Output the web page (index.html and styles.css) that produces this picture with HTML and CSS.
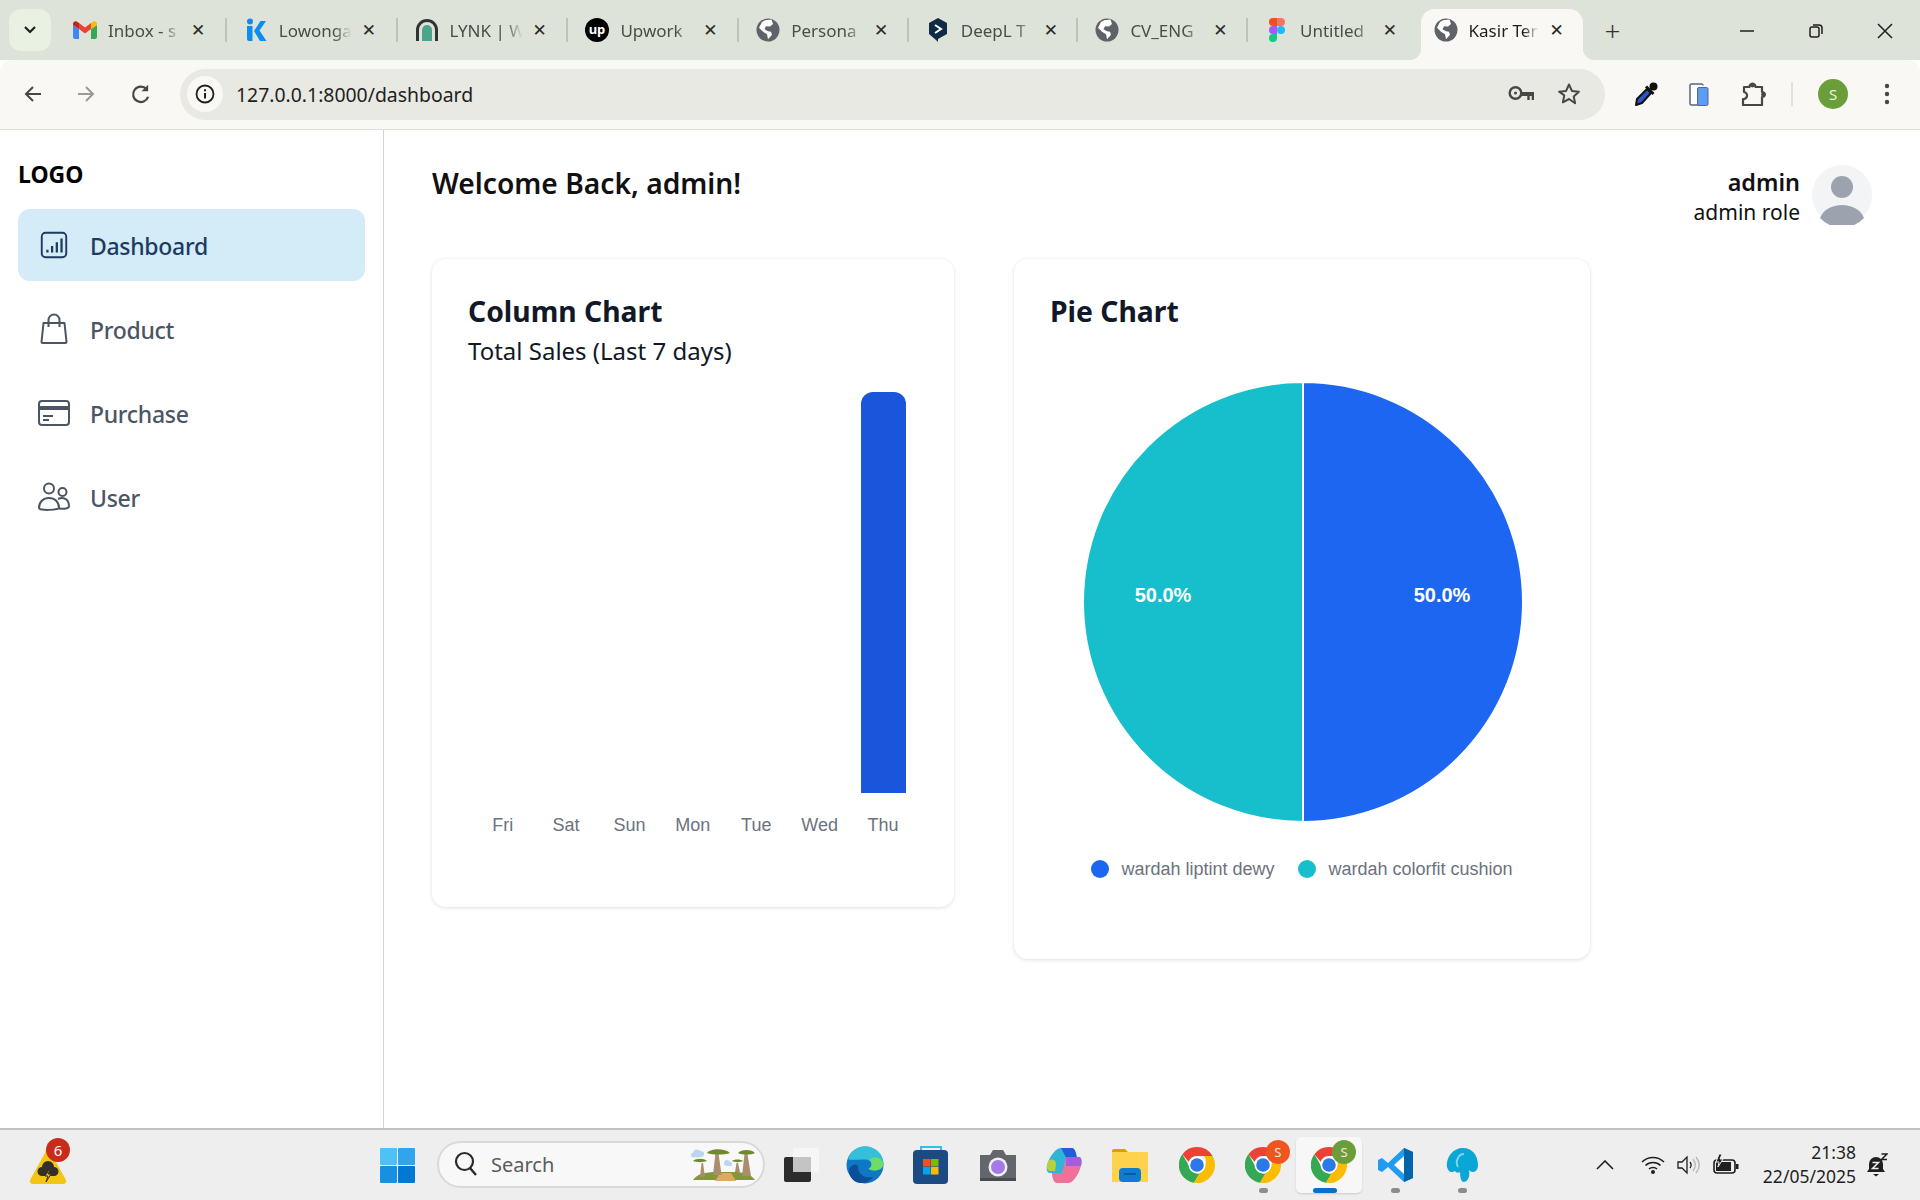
FILE: index.html
```html
<!DOCTYPE html>
<html lang="en">
<head>
    <meta charset="UTF-8">
    <meta name="viewport" content="width=device-width, initial-scale=1.0">
    <title>Kasir Terpadu</title>
    <link rel="stylesheet" href="styles.css">
</head>
<body>
    <svg class="defs" width="0" height="0">
        <symbol id="globe" viewBox="0 0 24 24">
            <circle cx="12" cy="12" r="11.5" fill="#5f6368"/>
            <path fill="#fff" d="M9 2.2 15.5 1.6 17 6l-3 2.5-4-.2-1.5 3 3.5 2 3 .5 1 3-4 4.5-1-5-4-2.5-4-4L6 4z"/>
        </symbol>
        <symbol id="chrome" viewBox="0 0 36 36">
            <path fill="#ea4335" d="M18 0a18 18 0 0 1 15.6 9H18a9 9 0 0 0-8.4 5.7L3.4 7.2A18 18 0 0 1 18 0z"/>
            <path fill="#34a853" d="M3.4 7.2 10.700 20a9 9 0 0 0 10 6.600L15 35.800A18 18 0 0 1 3.400 7.200z"/>
            <path fill="#fbbc04" d="M33.600 9A18 18 0 0 1 15 35.800L23 22a9 9 0 0 0 2-13z"/>
            <circle cx="18" cy="18" r="8.500" fill="#fff"/>
            <circle cx="18" cy="18" r="6.800" fill="#2b78e8"/>
        </symbol>
    </svg>

    <div class="tabstrip">
        <div class="tab-search"><svg width="14" height="10" viewBox="0 0 14 10"><path d="M2 2l5 5 5-5" fill="none" stroke="#1f1f1f" stroke-width="2.200"/></svg></div>
        <div class="tab sep">
            <svg class="favicon" viewBox="0 0 24 18"><path fill="#4285f4" d="M0 4v12a2 2 0 0 0 2 2h4V8z"/><path fill="#34a853" d="M18 18h4a2 2 0 0 0 2-2V4l-6 4z"/><path fill="#ea4335" d="M6 8V2l6 4.500L18 2v6l-6 4.500z"/><path fill="#fbbc04" d="M18 2v6l6-4V3c0-2.500-2.800-3.600-4.500-2z"/><path fill="#c5221f" d="M0 3v1l6 4V2L4.500 1C2.800-.6 0 .5 0 3z"/></svg>
            <span class="tab-title">Inbox - s</span><span class="tab-close">✕</span>
        </div>
        <div class="tab sep">
            <svg class="favicon" viewBox="0 0 24 24"><circle cx="6" cy="3.500" r="3" fill="#0a8cf0"/><path fill="#0a8cf0" d="M3 8h5.500v15H5a2 2 0 0 1-2-2zM10 13l6.500-10H22l-6.500 9.500L22.500 23H16z"/></svg>
            <span class="tab-title">Lowonga</span><span class="tab-close">✕</span>
        </div>
        <div class="tab sep">
            <svg class="favicon" viewBox="0 0 24 24"><path fill="none" stroke="#2f3336" stroke-width="3" d="M2.500 23V12a9.500 9.500 0 0 1 19 0v11"/><path fill="#4aa58a" d="M7 23V12a5 5 0 0 1 10 0v11z"/></svg>
            <span class="tab-title">LYNK | W</span><span class="tab-close">✕</span>
        </div>
        <div class="tab sep">
            <svg class="favicon" viewBox="0 0 24 24"><circle cx="12" cy="12" r="12" fill="#000"/><text x="12" y="15.500" class="up-mark">up</text></svg>
            <span class="tab-title">Upwork</span><span class="tab-close">✕</span>
        </div>
        <div class="tab sep">
            <svg class="favicon"><use href="#globe"/></svg>
            <span class="tab-title">Persona</span><span class="tab-close">✕</span>
        </div>
        <div class="tab sep">
            <svg class="favicon" viewBox="0 0 24 24"><path fill="#0f2b46" d="M12 0l9 5v11l-9 5v3l-2-2-7-6V5z"/><path fill="none" stroke="#fff" stroke-width="2" d="M9 7l6 4-6 4"/></svg>
            <span class="tab-title">DeepL T</span><span class="tab-close">✕</span>
        </div>
        <div class="tab sep">
            <svg class="favicon"><use href="#globe"/></svg>
            <span class="tab-title">CV_ENG</span><span class="tab-close">✕</span>
        </div>
        <div class="tab">
            <svg class="favicon" viewBox="0 0 16 24"><path fill="#f24e1e" d="M4 0h4v8H4a4 4 0 0 1 0-8z"/><path fill="#ff7262" d="M8 0h4a4 4 0 0 1 0 8H8z"/><path fill="#a259ff" d="M4 8h4v8H4a4 4 0 0 1 0-8z"/><circle cx="12" cy="12" r="4" fill="#1abcfe"/><path fill="#0acf83" d="M4 16h4v4a4 4 0 1 1-4-4z"/></svg>
            <span class="tab-title">Untitled</span><span class="tab-close">✕</span>
        </div>
        <div class="tab active">
            <svg class="favicon"><use href="#globe"/></svg>
            <span class="tab-title">Kasir Ter</span><span class="tab-close">✕</span>
        </div>
        <div class="new-tab">+</div>
        <div class="window-btns">
            <svg width="16" height="16" viewBox="0 0 16 16"><path d="M1 8h14" stroke="#1f1f1f" stroke-width="1.500"/></svg>
            <svg width="16" height="16" viewBox="0 0 16 16"><rect x="2" y="4" width="9" height="10" rx="2" fill="none" stroke="#1f1f1f" stroke-width="1.500"/><path d="M5 2h6a3 3 0 0 1 3 3v6" fill="none" stroke="#1f1f1f" stroke-width="1.500"/></svg>
            <svg width="16" height="16" viewBox="0 0 16 16"><path d="M1 1l14 14M15 1 1 15" stroke="#1f1f1f" stroke-width="1.500"/></svg>
        </div>
    </div>

    <div class="toolbar">
        <div class="nav-btns">
            <svg width="20" height="20" viewBox="0 0 20 20"><path d="M18 10H3M10 3l-7 7 7 7" fill="none" stroke="#474747" stroke-width="2"/></svg>
            <svg width="20" height="20" viewBox="0 0 20 20"><path d="M2 10h15M10 3l7 7-7 7" fill="none" stroke="#9a9a98" stroke-width="2"/></svg>
            <svg width="22" height="22" viewBox="0 0 20 20"><path d="M16.500 12.500A7 7 0 1 1 15 5.500" fill="none" stroke="#474747" stroke-width="2"/><path d="M16.500 1.500v6h-6z" fill="#474747"/></svg>
        </div>
        <div class="address-bar">
            <div class="site-info"><svg width="20" height="20" viewBox="0 0 20 20"><circle cx="10" cy="10" r="8.500" fill="none" stroke="#1f1f1f" stroke-width="1.800"/><path d="M10 9v5.500M10 5.200v2" stroke="#1f1f1f" stroke-width="2"/></svg></div>
            <span class="url">127.0.0.1:8000/dashboard</span>
            <div class="address-icons">
                <svg width="27" height="16" viewBox="0 0 27 16"><circle cx="7.500" cy="7" r="5.800" fill="none" stroke="#474747" stroke-width="2.400"/><circle cx="7.500" cy="7" r="1.500" fill="#474747"/><path d="M13 5.900h13v8h-2.300v-4h-2v4h-2.400v-4H13z" fill="#474747"/></svg>
                <svg width="24" height="24" viewBox="0 0 24 24"><path d="M12 2.500l2.900 6.400 7 .8-5.200 4.700 1.400 6.900L12 17l-6.100 3.300 1.400-6.900L2.100 9.700l7-.8z" fill="none" stroke="#474747" stroke-width="2" stroke-linejoin="round"/></svg>
            </div>
        </div>
        <div class="toolbar-ext">
            <svg class="ext-drop" width="24" height="24" viewBox="0 0 24 24"><circle cx="19.500" cy="4.500" r="4" fill="#111"/><path d="M13 3.500l7.500 7.500-2 2L11 5.500z" fill="#111"/><path d="M13 7l4 4-9 10-6 2 1-6z" fill="#2f54c8" stroke="#111" stroke-width="2" stroke-linejoin="round"/></svg>
            <svg class="ext-phone" width="20" height="23" viewBox="0 0 20 23"><path d="M14 2.500A1.500 1.500 0 0 0 12.500 1h-10A1.500 1.500 0 0 0 1 2.500v18A1.500 1.500 0 0 0 2.500 22H9" fill="#fff" stroke="#5a6578" stroke-width="1.500"/><rect x="8.500" y="4.500" width="10.500" height="18" rx="1.500" fill="#5b9cf5" stroke="#5a6578"/></svg>
            <svg class="ext-puzzle" width="26" height="24" viewBox="0 0 26 24"><path d="M3 5h5.500a3 3 0 0 1 6 0H21v5a2.500 2.500 0 0 1 0 5v8H2v-6a3.500 3.500 0 0 0 1-7z" fill="none" stroke="#474747" stroke-width="2.200" stroke-linejoin="round"/><circle cx="11.500" cy="3" r="2.400" fill="#474747"/><circle cx="22.500" cy="12.500" r="2.400" fill="#474747"/></svg>
            <span class="ext-divider"></span>
            <span class="profile-dot">S</span>
            <svg class="ext-menu" width="6" height="22" viewBox="0 0 6 22"><circle cx="3" cy="3" r="2.200" fill="#474747"/><circle cx="3" cy="11" r="2.200" fill="#474747"/><circle cx="3" cy="19" r="2.200" fill="#474747"/></svg>
        </div>
    </div>

    <div class="app">
        <aside class="sidebar">
            <div class="logo">LOGO</div>
            <nav class="side-nav">
                <a class="nav-item current">
                    <svg class="nav-icon" viewBox="-2 -2 34 34"><rect x="2" y="2" width="26" height="26" rx="4" fill="none" stroke="currentColor" stroke-width="2"/><path d="M8 23v-3M13 23v-7M18 23V12M23 23V8" stroke="currentColor" stroke-width="2.400"/></svg>
                    <span>Dashboard</span>
                </a>
                <a class="nav-item">
                    <svg class="nav-icon" viewBox="0 0 30 32"><path d="M4.500 10h21l2 19a1 1 0 0 1-1 1h-23a1 1 0 0 1-1-1z" fill="none" stroke="currentColor" stroke-width="2" stroke-linejoin="round"/><path d="M9.500 14V7a5.500 5.500 0 0 1 11 0v7" fill="none" stroke="currentColor" stroke-width="2"/></svg>
                    <span>Product</span>
                </a>
                <a class="nav-item">
                    <svg class="nav-icon" viewBox="0 0 32 26"><rect x="1" y="1" width="30" height="24" rx="3" fill="none" stroke="currentColor" stroke-width="2"/><path d="M1 8h30" stroke="currentColor" stroke-width="4"/><path d="M5 16h10M5 20h6" stroke="currentColor" stroke-width="2"/></svg>
                    <span>Purchase</span>
                </a>
                <a class="nav-item">
                    <svg class="nav-icon" viewBox="0 0 32 30"><circle cx="11" cy="6.500" r="5" fill="none" stroke="currentColor" stroke-width="2"/><circle cx="24.500" cy="10" r="4" fill="none" stroke="currentColor" stroke-width="2"/><path d="M1 26c0-6 4-10 10-10s10 4 10 10c0 2-20 3-20 0z" fill="none" stroke="currentColor" stroke-width="2"/><path d="M20 17c5-2.500 11 0 11 7 0 3-5 3-10 2.500" fill="none" stroke="currentColor" stroke-width="2"/></svg>
                    <span>User</span>
                </a>
            </nav>
        </aside>

        <main class="content">
            <header class="page-head">
                <h1>Welcome Back, admin!</h1>
                <div class="user-box">
                    <div class="user-text">
                        <div class="user-name">admin</div>
                        <div class="user-role">admin role</div>
                    </div>
                    <svg class="avatar" viewBox="0 0 60 60"><circle cx="30" cy="30" r="30" fill="#f3f4f6"/><circle cx="30" cy="22" r="11" fill="#9ca3af"/><path d="M8 53c3-8 12-13 22-13s19 5 22 13a30 30 0 0 1-44 0z" fill="#9ca3af"/></svg>
                </div>
            </header>

            <section class="cards">
                <div class="card card-column">
                    <h2>Column Chart</h2>
                    <p class="card-sub">Total Sales (Last 7 days)</p>
                    <div class="bars">
                        <div class="bar-col"><div class="bar-track"></div><span>Fri</span></div>
                        <div class="bar-col"><div class="bar-track"></div><span>Sat</span></div>
                        <div class="bar-col"><div class="bar-track"></div><span>Sun</span></div>
                        <div class="bar-col"><div class="bar-track"></div><span>Mon</span></div>
                        <div class="bar-col"><div class="bar-track"></div><span>Tue</span></div>
                        <div class="bar-col"><div class="bar-track"></div><span>Wed</span></div>
                        <div class="bar-col"><div class="bar-track"><div class="bar" style="height: 100%"></div></div><span>Thu</span></div>
                    </div>
                </div>

                <div class="card card-pie">
                    <h2>Pie Chart</h2>
                    <svg class="pie" viewBox="-1 0 442 442">
                        <path d="M221 1A220 220 0 0 0 221 441Z" fill="#17bfcc" stroke="#fff" stroke-width="2"/>
                        <path d="M221 1A220 220 0 0 1 221 441Z" fill="#1d66f2" stroke="#fff" stroke-width="2"/>
                        <text x="81" y="221">50.0%</text>
                        <text x="360" y="221">50.0%</text>
                    </svg>
                    <div class="legend">
                        <span class="legend-item"><i class="dot dot-blue"></i>wardah liptint dewy</span>
                        <span class="legend-item"><i class="dot dot-teal"></i>wardah colorfit cushion</span>
                    </div>
                </div>
            </section>
        </main>
    </div>

    <footer class="taskbar">
        <div class="weather">
            <svg width="38" height="36" viewBox="0 0 38 36"><path d="M16 4a3 3 0 0 1 6 0l15 27a3 3 0 0 1-3 4H4a3 3 0 0 1-3-4z" fill="#f3c613"/><path d="M13 27a4.500 4.500 0 0 1 0-9 6 6 0 0 1 12 0 4.500 4.500 0 0 1 0 9z" fill="#33302a"/><path d="M20 21l-4 6h3l-2 6 5-8h-3l2-4z" fill="#f3c613" stroke="#33302a"/></svg>
            <span class="weather-badge">6</span>
        </div>
        <svg class="win-logo" width="35" height="35" viewBox="0 0 35 35"><rect width="17" height="17" rx="1" fill="#4cc2f7"/><rect x="18" width="17" height="17" rx="1" fill="#2ea5ec"/><rect y="18" width="17" height="17" rx="1" fill="#1590e3"/><rect x="18" y="18" width="17" height="17" rx="1" fill="#0078d4"/></svg>
        <div class="task-search">
            <svg width="24" height="26" viewBox="0 0 24 26"><circle cx="10.500" cy="10.500" r="8.500" fill="none" stroke="#2a2a2a" stroke-width="2.200"/><path d="M16 17l6 7" stroke="#2a2a2a" stroke-width="2.400"/></svg>
            <span>Search</span>
            <svg class="search-art" width="66" height="36" viewBox="0 0 66 36">
                <path d="M3 34c4-6 12-8 24-8h18c8 0 16 2 20 8z" fill="#83973a"/>
                <path d="M25 35l5-8h11l5 8z" fill="#dfa768"/>
                <path d="M10 31l1.500-14h1.500l2 14zM23 29l2.500-22h3l3 22zM45 26l1.500-9h1.500l2 9zM52 30l2.500-22h3l3.500 22z" fill="#a98d6c"/>
                <path d="M3 15c3-3 11-3 14 0-4 1.500-10 1.500-14 0zM17 7c4-5 18-5 23 0-6 2-17 2-23 0zM42 15c2-2 9-2 11 0-3 1.500-8 1.500-11 0zM48 7c3-4 14-4 17 0-4 2-13 2-17 0z" fill="#6f8a2c"/>
                <circle cx="7" cy="7.500" r="4" fill="#b9d6ee"/><circle cx="11" cy="8" r="3" fill="#b9d6ee"/><circle cx="3.500" cy="9" r="2.500" fill="#b9d6ee"/>
                <circle cx="37" cy="17" r="3" fill="#b9d6ee"/><circle cx="40" cy="18" r="2.200" fill="#b9d6ee"/>
            </svg>
        </div>
        <svg class="task-view" width="35" height="34" viewBox="0 0 35 34"><rect y="9" width="27" height="25" rx="2" fill="#2c2c2c"/><rect x="9" width="26" height="24" rx="2" fill="#f6f6f6"/><rect x="9" y="9" width="18" height="15" fill="#c4c4c4"/></svg>
        <div class="task-apps">
            <div class="app-btn">
                <svg width="38" height="38" viewBox="0 0 38 38"><circle cx="19" cy="19" r="18.500" fill="#0f78c4"/><path d="M2 13C5 4 12 .5 19 .5c10 0 18.500 7 18.500 17 0 5-5 7-9 7-3 0-5-1-6-2 4-1 5-9-4-9-7 0-14 1-16.500-.5z" fill="#34c0d8"/><path d="M37.500 17.500c0 5-5 7-9 7-3 0-5-1-6-2 4-1 4-6 1-9 5-4 11-3 14 4z" fill="#6fdc6a"/><path d="M12 21c0 7 7 12 15 10-3 5-8 6-12 6C7 37 2 29 3 23c3-5 9-6 9-2z" fill="#0a4f99"/></svg>
            </div>
            <div class="app-btn">
                <svg width="36" height="38" viewBox="0 0 36 38"><path d="M8 6V1h20v5" fill="none" stroke="#35bdf2" stroke-width="2"/><rect y="4" width="35" height="34" rx="4" fill="#1c4a82"/><rect x="10" y="13" width="7.500" height="7.500" fill="#f25022"/><rect x="18" y="13" width="7.500" height="7.500" fill="#7fba00"/><rect x="10" y="21" width="7.500" height="7.500" fill="#00a4ef"/><rect x="18" y="21" width="7.500" height="7.500" fill="#ffb900"/></svg>
            </div>
            <div class="app-btn">
                <svg width="36" height="32" viewBox="0 0 36 32"><path d="M0 6h10l3-5h10l3 5h10v26H0z" fill="#63666c"/><rect y="29" width="36" height="3" fill="#484a4e"/><circle cx="18" cy="18" r="9.500" fill="#f0f0f0"/><circle cx="18" cy="18" r="7" fill="#a47ae8"/></svg>
            </div>
            <div class="app-btn">
                <svg width="36" height="36" viewBox="0 0 36 36"><path d="M15 1h11c3 0 5 10 5 13H21l-5 12H4C0 26 0 20 2 15 5 8 10 1 15 1z" fill="#2fb6d6"/><path d="M2 15c2-4 8-3 8 2l-1 7H4c-3 0-4-5-2-9z" fill="#b6d23a"/><path d="M15 1h11c3 0 5 6 5 13h-9z" fill="#1f5fd8"/><path d="M20 10h13c3 0 3 7 1 12-2 6-7 14-12 14H11c-3 0-5-5-5-10h10z" fill="#f0709a"/><path d="M20 10h13c3 0 3 5 2 9H20z" fill="#a35ee0"/></svg>
            </div>
            <div class="app-btn">
                <svg width="36" height="34" viewBox="0 0 36 34"><path d="M0 3a2 2 0 0 1 2-2h11l3 3h-16z" fill="#d9a000"/><path d="M0 4h36v30H0z" fill="#ffd24d"/><rect x="7" y="20" width="22" height="14" rx="4" fill="#0c7dd0"/><path d="M12 26h12" stroke="#054f8e" stroke-width="1.500"/></svg>
            </div>
            <div class="app-btn"><svg width="36" height="36"><use href="#chrome"/></svg></div>
            <div class="app-btn">
                <svg width="36" height="36"><use href="#chrome"/></svg>
                <span class="app-badge badge-orange">S</span>
                <i class="run-dot"></i>
            </div>
            <div class="app-btn app-open">
                <svg width="36" height="36"><use href="#chrome"/></svg>
                <span class="app-badge badge-green">S</span>
                <i class="run-bar"></i>
            </div>
            <div class="app-btn">
                <svg width="36" height="36" viewBox="0 0 36 36"><path d="M26 1l9 4v26l-9 4L10 20l-6 5-4-2V13l4-2 6 5z" fill="#1f9cf0"/><path d="M26 9l-10 9 10 9z" fill="#fff"/><path d="M26 1l9 4v26l-9 4z" fill="#0065a9"/></svg>
                <i class="run-dot"></i>
            </div>
            <div class="app-btn">
                <svg width="36" height="36" viewBox="0 0 36 36"><path d="M3 20C2 9 10 1 19 1s15 7 15 17c0 4-2 7-5 7-2 0-3-1-4-2 1 5 0 11-5 12-3 0-4-5-4-10-2 1-4 1-5-1-2 1-6 3-8-4z" fill="#0aa6d6"/><path d="M14 20c-3-5 0-13 6-13" fill="none" stroke="#77d8f0" stroke-width="2"/></svg>
                <i class="run-dot"></i>
            </div>
        </div>
        <div class="tray">
            <svg class="tray-up" width="18" height="10" viewBox="0 0 18 10"><path d="M1 9l8-8 8 8" fill="none" stroke="#1f1f1f" stroke-width="1.600"/></svg>
            <svg class="tray-wifi" width="24" height="20" viewBox="0 0 24 20"><path d="M1 7c6-6 16-6 22 0M4.500 10.500c4-4 11-4 15 0M8 14c2-2 6-2 8 0" fill="none" stroke="#1f1f1f" stroke-width="1.500"/><circle cx="12" cy="17" r="2" fill="#1f1f1f"/></svg>
            <svg class="tray-sound" width="24" height="20" viewBox="0 0 24 20"><path d="M1 7v6h4l5 5V2L5 7z" fill="none" stroke="#1f1f1f" stroke-width="1.300"/><path d="M13 7c1.500 2 1.500 4 0 6" fill="none" stroke="#1f1f1f" stroke-width="1.300"/><path d="M16 4c3 4 3 8 0 12M19 2c4 5 4 11 0 16" fill="none" stroke="#b5b5b5" stroke-width="1.300"/></svg>
            <svg class="tray-battery" width="26" height="22" viewBox="0 0 26 22"><rect x="1" y="6" width="21" height="13" rx="3" fill="none" stroke="#1f1f1f" stroke-width="1.600"/><rect x="3" y="8" width="15" height="9" fill="#1f1f1f"/><rect x="23" y="10" width="2.500" height="5" fill="#1f1f1f"/><path d="M6 0L3 8h3l-1 5 5-8H7l2-5z" fill="#1f1f1f" stroke="#eee"/></svg>
            <div class="tray-clock"><span>21:38</span><span>22/05/2025</span></div>
            <svg class="tray-bell" width="22" height="24" viewBox="0 0 22 24"><path d="M10 4a7 7 0 0 0-7 7v5l-2 3h18l-2-3v-5a7 7 0 0 0-7-7z" fill="#1f1f1f"/><path d="M7 21h6l-3 2.500z" fill="#1f1f1f"/><path d="M6.500 9.500h6l-6 6h6" fill="none" stroke="#eee" stroke-width="1.500"/><path d="M15.500 1h5.500l-5.500 5.500h5.500" fill="none" stroke="#1f1f1f" stroke-width="1.500"/></svg>
        </div>
    </footer>
</body>
</html>
```

FILE: styles.css
```css
* {
    box-sizing: border-box;
}

body {
    margin: 0;
    width: 1920px;
    height: 1200px;
    display: flex;
    flex-direction: column;
    overflow: hidden;
    background: #fff;
    color: #111827;
    font-family: 'Noto Sans', 'Open Sans', sans-serif;
}

.defs {
    position: absolute;
}

/* browser tabs */
.tabstrip {
    height: 60px;
    flex: none;
    display: flex;
    align-items: flex-end;
    padding-left: 9px;
    background: #dee3d9;
}

.tab-search {
    width: 42px;
    height: 42px;
    margin: 0 5px 9px 0;
    display: flex;
    align-items: center;
    justify-content: center;
    border-radius: 12px;
    background: #e9f1e2;
}

.tab {
    position: relative;
    width: 169.6px;
    height: 51px;
    flex: none;
    display: flex;
    align-items: center;
    padding: 0 0 9px 17px;
}

.tab:nth-child(-n+5) {
    width: 170.8px;
}

.tab.sep::after {
    content: '';
    position: absolute;
    right: 0;
    top: 9px;
    width: 2px;
    height: 24px;
    background: #bcc5b5;
}

.favicon {
    width: 24px;
    height: 24px;
    flex: none;
}

.tab-title {
    width: 74px;
    margin-left: 11px;
    overflow: hidden;
    white-space: nowrap;
    font-size: 17px;
    color: #4a4d47;
    -webkit-mask-image: linear-gradient(90deg, #000 75%, transparent 98%);
    mask-image: linear-gradient(90deg, #000 75%, transparent 98%);
}

.tab-close {
    width: 16px;
    margin-left: 8px;
    font-size: 17px;
    font-family: 'DejaVu Sans', sans-serif;
    text-align: center;
    color: #2a2c28;
}

.up-mark {
    fill: #fff;
    font: 700 13px 'Noto Sans', sans-serif;
    text-anchor: middle;
}

.tab.active {
    width: 162px;
    margin-left: 3px;
    padding-left: 13px;
    background: #f9f8f4;
    border-radius: 14px 14px 0 0;
}

.tab.active::before,
.tab.active::after {
    content: '';
    position: absolute;
    bottom: 0;
    width: 12px;
    height: 12px;
}

.tab.active::before {
    left: -12px;
    background: radial-gradient(circle at 0 0, transparent 12px, #f9f8f4 12.5px);
}

.tab.active::after {
    right: -12px;
    background: radial-gradient(circle at 100% 0, transparent 12px, #f9f8f4 12.5px);
}

.tab.active .tab-title {
    width: 72px;
    color: #1f1f1f;
}

.new-tab {
    width: 30px;
    margin: 0 0 9px 15px;
    font-size: 28px;
    font-weight: 300;
    line-height: 42px;
    text-align: center;
    color: #333;
}

.window-btns {
    margin: 0 27px 21px auto;
    display: flex;
    gap: 53px;
}

/* address bar row */
.toolbar {
    height: 70px;
    flex: none;
    display: flex;
    align-items: center;
    padding-bottom: 1px;
    border-bottom: 1px solid #e0dfda;
    border-radius: 12px 12px 0 0;
    background: #f9f8f4;
}

.nav-btns {
    width: 180px;
    padding: 0 0 0 23px;
    display: flex;
    align-items: center;
    gap: 33px;
}

.nav-btns svg:last-child {
    margin-left: 1px;
}

.address-bar {
    width: 1425px;
    height: 51px;
    display: flex;
    align-items: center;
    padding-left: 7px;
    border-radius: 26px;
    background: #e8e9e2;
}

.site-info {
    width: 36px;
    height: 36px;
    display: flex;
    align-items: center;
    justify-content: center;
    border-radius: 50%;
    background: #f9f8f4;
}

.url {
    margin-left: 13px;
    font-size: 19.4px;
    color: #1f1f1f;
}

.address-icons {
    margin-left: auto;
    padding-right: 24px;
    display: flex;
    align-items: center;
    gap: 22px;
}

.toolbar-ext {
    flex: 1;
    display: flex;
    align-items: center;
}

.ext-drop {
    margin-left: 29px;
}

.ext-phone {
    margin-left: 31px;
}

.ext-puzzle {
    margin-left: 32px;
}

.ext-divider {
    width: 2px;
    height: 24px;
    margin-left: 24px;
    background: #dde5d6;
}

.profile-dot {
    width: 30px;
    height: 30px;
    margin-left: 25px;
    border-radius: 50%;
    background: #6a9e3a;
    color: #e9f3dd;
    font-size: 15px;
    line-height: 30px;
    text-align: center;
}

.ext-menu {
    margin-left: 36px;
}

/* page */
.app {
    flex: 1;
    display: flex;
    min-height: 0;
}

.sidebar {
    width: 384px;
    flex: none;
    padding: 28px 18px 0;
    border-right: 1px solid #d1d5db;
}

.logo {
    height: 32px;
    margin-bottom: 19px;
    font-size: 23px;
    font-weight: 700;
    line-height: 32px;
    color: #000;
}

.side-nav {
    width: 347px;
    display: flex;
    flex-direction: column;
    gap: 12px;
}

.nav-item {
    height: 72px;
    display: flex;
    align-items: center;
    padding-left: 20px;
    border-radius: 12px;
    font-size: 23px;
    font-weight: 500;
    letter-spacing: -0.3px;
    color: #4b5563;
}

.nav-item span {
    padding-top: 2px;
}

.nav-item.current {
    background: #d4ebf8;
    color: #1e3a5f;
}

.nav-icon {
    width: 32px;
    height: 32px;
    flex: none;
    margin-right: 20px;
}

.content {
    flex: 1;
    padding: 35px 48px 0;
}

.page-head {
    display: flex;
    justify-content: space-between;
    align-items: flex-start;
    height: 60px;
    margin-bottom: 34px;
}

.page-head h1 {
    margin: 0;
    font-size: 28.2px;
    font-weight: 600;
    line-height: 36px;
    color: #111;
}

.user-box {
    display: flex;
    gap: 12px;
}

.user-text {
    padding-top: 2px;
    text-align: right;
    font-size: 23.4px;
    line-height: 30px;
    color: #111;
}

.user-name {
    font-weight: 600;
}

.user-role {
    font-size: 21px;
}

.avatar {
    width: 60px;
    height: 60px;
}

.cards {
    display: flex;
    align-items: flex-start;
    gap: 60px;
}

.card {
    padding: 32px 36px 0;
    border-radius: 14px;
    background: #fff;
    box-shadow: 0 1px 4px rgba(0, 0, 0, 0.12), 0 0 2px rgba(0, 0, 0, 0.03);
}

.card h2 {
    margin: 0;
    font-size: 28.3px;
    font-weight: 700;
    line-height: 40px;
    color: #111827;
}

.card-sub {
    margin: 0;
    font-size: 24px;
    line-height: 40px;
    color: #111827;
}

.card-column {
    width: 522px;
    height: 648px;
}

.bars {
    display: flex;
    padding: 0 3px;
    margin-top: 21px;
}

.bar-col {
    width: 63.4px;
    display: flex;
    flex-direction: column;
    align-items: center;
    font-family: 'Liberation Sans', Arial, sans-serif;
    font-size: 18px;
    color: #6b7280;
}

.bar-track {
    width: 45px;
    height: 401px;
    margin-bottom: 22px;
    display: flex;
    align-items: flex-end;
}

.bar {
    width: 100%;
    border-radius: 12px 12px 0 0;
    background: #1a56db;
}

.card-pie {
    width: 576px;
    height: 700px;
}

.pie {
    display: block;
    width: 442px;
    height: 442px;
    margin: 50px auto 0;
}

.pie text {
    fill: #fff;
    font-family: 'Liberation Sans', Arial, sans-serif;
    font-size: 20px;
    font-weight: 700;
    text-anchor: middle;
}

.legend {
    display: flex;
    justify-content: center;
    gap: 24px;
    margin-top: 35px;
    font-family: 'Liberation Sans', Arial, sans-serif;
    font-size: 18px;
    line-height: 22px;
    color: #6b7280;
}

.legend-item {
    display: flex;
    align-items: center;
    gap: 12px;
}

.dot {
    width: 18px;
    height: 18px;
    border-radius: 50%;
}

.dot-blue {
    background: #1d66f2;
}

.dot-teal {
    background: #17bfcc;
}

/* windows taskbar */
.taskbar {
    height: 72px;
    flex: none;
    display: flex;
    align-items: center;
    border-top: 2px solid #c2c2c2;
    background: #eeeeee;
}

.weather {
    position: relative;
    width: 38px;
    height: 36px;
    margin: 4px 0 0 29px;
}

.weather-badge {
    position: absolute;
    left: 17px;
    top: -11px;
    width: 24px;
    height: 24px;
    border-radius: 50%;
    background: #c92c1b;
    color: #fff;
    font-size: 15px;
    line-height: 24px;
    text-align: center;
}

.win-logo {
    margin-left: 313px;
}

.task-search {
    width: 328px;
    height: 47px;
    margin: 0 0 2px 22px;
    display: flex;
    align-items: center;
    padding-left: 15px;
    border: 2px solid #d9d9d9;
    border-radius: 24px;
    background: #f8f8f8;
    font-size: 20px;
    color: #5b5b5b;
}

.task-search span {
    margin-left: 13px;
}

.search-art {
    margin-left: auto;
    margin-right: 7px;
}

.task-view {
    margin-left: 19px;
}

.task-apps {
    display: flex;
    margin-left: 13px;
}

.app-btn {
    position: relative;
    width: 66.3px;
    height: 56px;
    display: flex;
    align-items: center;
    justify-content: center;
    border-radius: 5px;
}

.app-open {
    background: #f7f7f7;
    box-shadow: 0 1px 2px rgba(0, 0, 0, 0.15);
}

.app-badge {
    position: absolute;
    top: 3px;
    left: 36px;
    width: 24px;
    height: 24px;
    border-radius: 50%;
    color: #f4e8d8;
    font-size: 13px;
    line-height: 24px;
    text-align: center;
}

.badge-orange {
    background: #f0551f;
}

.badge-green {
    background: #6a9e3a;
}

.run-dot {
    position: absolute;
    bottom: 0;
    left: 29px;
    width: 9px;
    height: 5px;
    border-radius: 3px;
    background: #8c8c8c;
}

.run-bar {
    position: absolute;
    bottom: 0;
    left: 17px;
    width: 24px;
    height: 5px;
    border-radius: 3px;
    background: #0a6ed1;
}

.tray {
    flex: 1;
    display: flex;
    align-items: center;
}

.tray-up {
    margin-left: 101px;
}

.tray-wifi {
    margin-left: 27px;
}

.tray-sound {
    margin-left: 12px;
}

.tray-battery {
    margin-left: 12px;
}

.tray-clock {
    width: 117px;
    margin-bottom: 2px;
    display: flex;
    flex-direction: column;
    align-items: flex-end;
    font-size: 17.5px;
    line-height: 24px;
    color: #1f1f1f;
}

.tray-bell {
    margin-left: 10px;
}
```
